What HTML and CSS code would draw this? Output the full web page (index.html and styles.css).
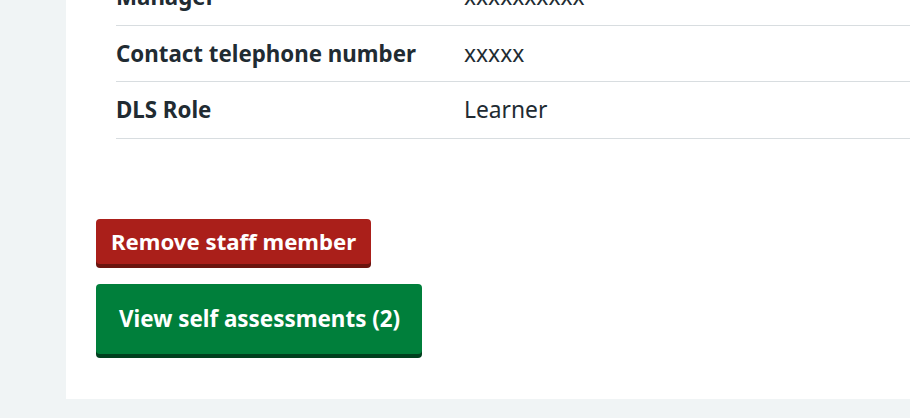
FILE: index.html
```html
<!DOCTYPE html>
<html lang="en">
<head>
<meta charset="utf-8">
<title>Staff member</title>
<link rel="stylesheet" href="styles.css">
</head>
<body>
<main class="panel">
  <dl class="summary">
    <div class="row">
      <dt class="key">Manager</dt>
      <dd class="value">xxxxxxxxxx</dd>
    </div>
    <div class="row">
      <dt class="key">Contact telephone number</dt>
      <dd class="value">xxxxx</dd>
    </div>
    <div class="row">
      <dt class="key">DLS Role</dt>
      <dd class="value">Learner</dd>
    </div>
  </dl>
  <div class="actions">
    <a class="btn btn-warning" href="#">Remove staff member</a>
    <a class="btn btn-primary" href="#">View self assessments (2)</a>
  </div>
</main>
</body>
</html>
```

FILE: styles.css
```css
html, body {
  margin: 0;
  padding: 0;
}
body {
  background: #f0f4f5;
  font-family: "Noto Sans", "Open Sans", Arial, sans-serif;
  color: #212b32;
  height: 418px;
  overflow: hidden;
}
.panel {
  margin-left: 66px;
  background: #ffffff;
  padding: 0 0 45px 30px;
}
.summary {
  margin: -31px 0 0 20px;
  padding: 0;
}
.row {
  display: grid;
  grid-template-columns: 348px 1fr;
  align-items: center;
  height: 55.5px;
  border-bottom: 1px solid #d8dde0;
}
.key {
  font-weight: 700;
  font-size: 22.3px;
  margin: 0;
}
.value {
  margin: 0;
  font-size: 22.8px;
}
.actions {
  display: flex;
  flex-direction: column;
  align-items: flex-start;
  gap: 20px;
  margin-top: 80px;
}
.btn {
  display: inline-flex;
  align-items: center;
  color: #ffffff;
  font-weight: 700;
  text-decoration: none;
  border-radius: 4px;
  font-size: 22.4px;
}
.btn-warning {
  background: #aa1f1a;
  box-shadow: 0 4px 0 #6b140e;
  height: 45px;
  padding: 0 15px;
  font-size: 22.2px;
}
.btn-primary {
  background: #007f3b;
  box-shadow: 0 4px 0 #00401e;
  height: 70px;
  padding: 0 22px 0 23px;
}
```
